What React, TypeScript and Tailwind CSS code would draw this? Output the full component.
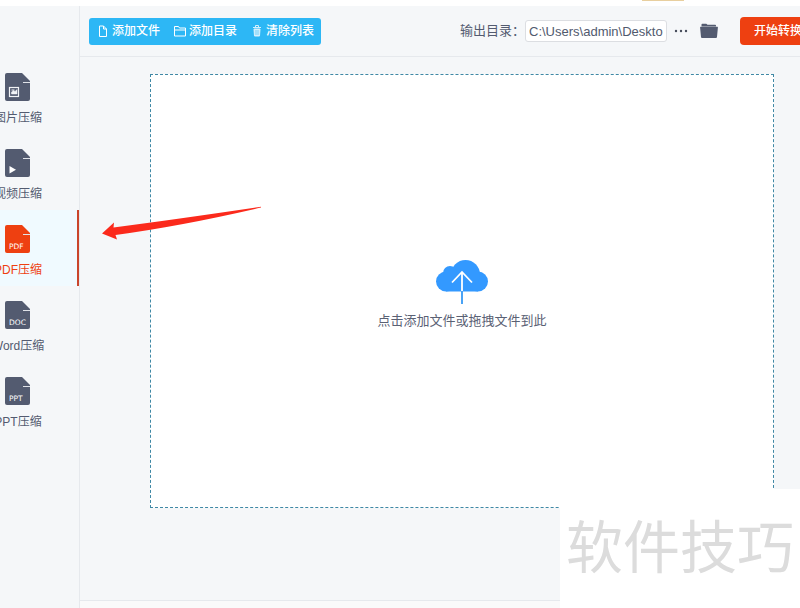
import type { ReactNode } from "react"
import clsx from "clsx"

const navItems = [
    { label: "图片压缩", kind: "image" },
    { label: "视频压缩", kind: "video" },
    { label: "PDF压缩", kind: "PDF", active: true },
    { label: "Word压缩", kind: "DOC" },
    { label: "PPT压缩", kind: "PPT" },
]

function FileBadge({ kind }: { kind: string }) {
    return (
        <svg viewBox="0 0 26 28" className="h-7 w-[26px]" aria-hidden="true">
            <path d="M2 0h15l8 8v18a2 2 0 0 1-2 2H2a2 2 0 0 1-2-2V2a2 2 0 0 1 2-2z" fill="currentColor" />
            <path d="M18 9.500h7" stroke="#dfe2e8" strokeWidth="1" />
            {kind === "image" && (
                <g fill="none" stroke="#f1f3f6">
                    <rect x="4.5" y="14.5" width="9" height="9" strokeWidth="1.2" />
                    <path d="M6.5 21v-2l2-1.5 1.5 1 2-2V21z" fill="#f1f3f6" strokeWidth=".5" />
                    <path d="M6.5 17h3" strokeWidth="1" />
                </g>
            )}
            {kind === "video" && <path d="M4.500 17v7.500l6.500-3.700z" fill="#fff" />}
            {kind !== "image" && kind !== "video" && (
                <text x="4" y="24" fontSize="7.5" fill="#fff" fontFamily="DejaVu Sans, sans-serif">{kind}</text>
            )}
        </svg>
    )
}

function Sidebar() {
    return (
        <nav className="w-20 shrink-0 border-r border-[#e6e9ed] pt-[52px]">
            {navItems.map((item) => (
                <button
                    key={item.label}
                    type="button"
                    className={clsx(
                        "flex h-[76px] w-[79px] flex-col items-start border-r-2 pt-[15px]",
                        item.active
                            ? "border-[#c9452c] bg-[#f0faff] text-[#ee4011]"
                            : "border-transparent text-[#535b70]"
                    )}
                >
                    <span className="-ml-11 flex w-[124px] flex-col items-center gap-[5px]">
                        <FileBadge kind={item.kind} />
                        <span className="text-[12px] leading-6">{item.label}</span>
                    </span>
                </button>
            ))}
        </nav>
    )
}

function ToolButton({ icon, children }: { icon: ReactNode; children: ReactNode }) {
    return (
        <button type="button" className="flex items-center gap-0.5 text-[12px] font-medium text-white">
            <svg viewBox="0 0 14 14" className="size-[14px]" fill="none" stroke="currentColor" aria-hidden="true">
                {icon}
            </svg>
            {children}
        </button>
    )
}

function Toolbar() {
    return (
        <div className="flex h-[51px] items-center border-b border-[#e6e9ed] pl-[9px]">
            <div className="flex h-[27px] shrink-0 items-center gap-[13px] rounded-[3px] bg-[#2db7f5] px-[7px]">
                <ToolButton icon={<path d="M3.500 2h4l3 3v7.500h-7zM7.500 2v3h3" />}>添加文件</ToolButton>
                <ToolButton icon={<path d="M1.500 2.500h4l1 1.500h6v8h-11zM1.500 6h11" />}>添加目录</ToolButton>
                <ToolButton
                    icon={
                        <g opacity=".8">
                            <path d="M3 3.500h8M5.500 3V1.500h3V3" />
                            <path d="M4 5h6l-.5 7h-5z" fill="currentColor" />
                            <path d="M6 6v5M8 6v5" stroke="#2db7f5" strokeWidth=".6" />
                        </g>
                    }
                >
                    清除列表
                </ToolButton>
            </div>
            <div className="-mr-4 ml-auto flex shrink-0 items-center">
                <label htmlFor="output" className="text-[13px] text-[#535b70]">输出目录：</label>
                <input
                    id="output"
                    readOnly
                    defaultValue="C:\Users\admin\Deskto"
                    className="h-[22px] w-[142px] rounded-[3px] border border-[#dcdee2] bg-white px-[3px] text-[13px] text-[#515a6e]"
                />
                <button type="button" aria-label="更多" className="ml-[7px] text-[#464c5b]">
                    <svg viewBox="0 0 14 14" className="size-[14px]" fill="currentColor">
                        <circle cx="2" cy="7" r="1.200" />
                        <circle cx="7" cy="7" r="1.200" />
                        <circle cx="12" cy="7" r="1.200" />
                    </svg>
                </button>
                <button type="button" aria-label="打开目录" className="ml-3 text-[#535b70]">
                    <svg viewBox="0 0 18 16" className="h-4 w-[18px]" fill="currentColor">
                        <path d="M1.500 3.500V1.500q0-.8.8-.8h4l1.200 1.100h7.700q.8 0 .8.8v.9z" />
                        <path d="M.6 3.800h16.800q.6 0 .5.700L17 14q-.1 1-1 1H2q-.9 0-1-1L.1 4.500q-.1-.7.5-.7z" />
                    </svg>
                </button>
                <button type="button" className="ml-[22px] h-7 w-[76px] rounded-[4px] bg-[#ee4011] text-[12px] font-medium text-white">
                    开始转换
                </button>
            </div>
        </div>
    )
}

function DropZone() {
    return (
        <button
            type="button"
            className="flex flex-1 flex-col items-center justify-center gap-1 border border-dashed border-[#3f88a5] bg-white pt-2.5"
        >
            <svg viewBox="0 0 52 46" className="h-[46px] w-[52px]" aria-hidden="true">
                <g fill="#3399ff">
                    <circle cx="10" cy="22.500" r="10" />
                    <circle cx="42" cy="22.500" r="10" />
                    <circle cx="29.500" cy="15.500" r="14.500" />
                    <circle cx="14" cy="14" r="7" />
                    <path d="M10 16h32v16.500H10z" />
                </g>
                <path d="M26 13v19M16 23.500l10-10.500 10 10.500" fill="none" stroke="#fff" strokeWidth="1.800" />
                <path d="M26 32v13" stroke="#4aa3f5" strokeWidth="2" />
            </svg>
            <span className="text-[13px] leading-6 text-[#5a6174]">点击添加文件或拖拽文件到此</span>
        </button>
    )
}

export default function App() {
    return (
        <div className="relative flex h-screen flex-col overflow-hidden bg-[#f5f7f9] font-['Liberation_Sans','Noto_Sans_CJK_SC',sans-serif]">
            <header className="flex h-1.5 shrink-0 justify-end bg-white pr-[116px]">
                <span className="h-px w-[42px] bg-[#e8cf9f]" />
            </header>
            <div className="flex min-h-0 flex-1">
                <Sidebar />
                <div className="flex min-w-0 flex-1 flex-col">
                    <Toolbar />
                    <main className="flex flex-1 flex-col pt-[17px] pr-[26px] pb-[92px] pl-[70px]">
                        <DropZone />
                    </main>
                    <footer className="h-2 border-t border-[#e6e9ed] bg-[#fafafa]" />
                </div>
            </div>
            <svg viewBox="0 0 160 34" className="absolute top-[206px] left-[102px] h-[34px] w-40" aria-hidden="true">
                <path d="M0 27.500L12 16.500l-.5 5Q70 14 159 .8v.8Q80 20 13.500 29l1.500 4.500z" fill="#fb2a1c" />
            </svg>
            <div className="absolute right-0 bottom-0 flex h-[119px] w-60 items-center justify-center bg-white text-[57px] text-[#dcdcdc]">
                软件技巧
            </div>
        </div>
    )
}
